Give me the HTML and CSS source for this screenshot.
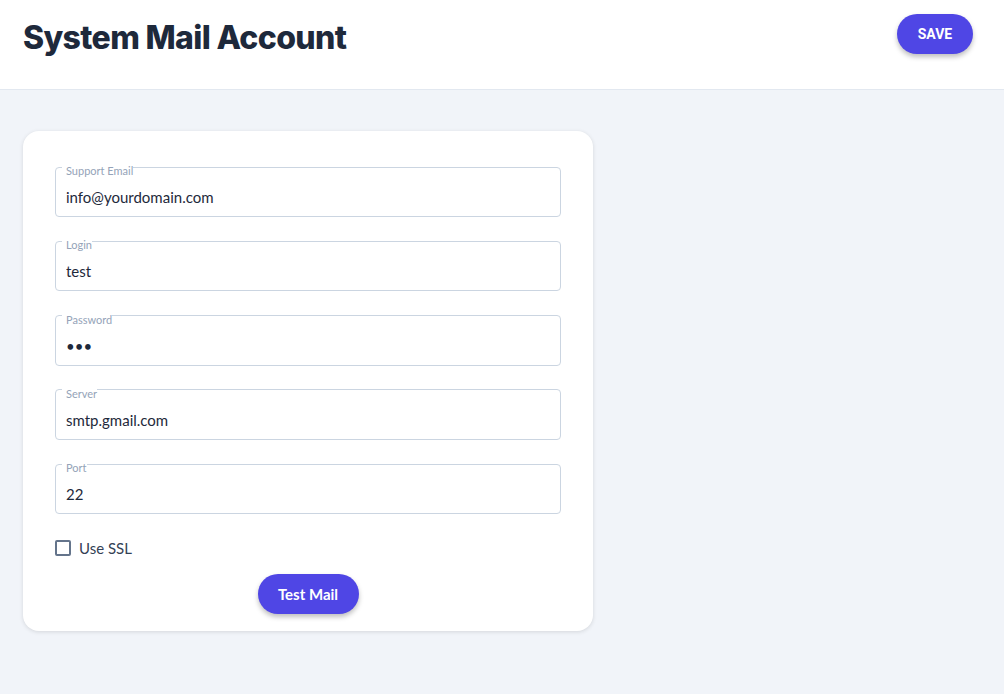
FILE: index.html
```html
<!DOCTYPE html>
<html lang="en">
<head>
    <meta charset="UTF-8">
    <meta name="viewport" content="width=device-width, initial-scale=1.0">
    <title>System Mail Account</title>
    <link rel="stylesheet" href="styles.css">
</head>
<body>
    <header class="topbar">
        <h1>System Mail Account</h1>
        <button type="button" class="btn btn-save">SAVE</button>
    </header>

    <main class="content">
        <form class="card">
            <fieldset class="field">
                <legend>Support Email</legend>
                <input type="text" value="info@yourdomain.com">
            </fieldset>

            <fieldset class="field">
                <legend>Login</legend>
                <input type="text" value="test">
            </fieldset>

            <fieldset class="field">
                <legend>Password</legend>
                <input type="password" value="abc">
            </fieldset>

            <fieldset class="field">
                <legend>Server</legend>
                <input type="text" value="smtp.gmail.com">
            </fieldset>

            <fieldset class="field">
                <legend>Port</legend>
                <input type="text" value="22">
            </fieldset>

            <label class="check">
                <span class="box"></span>
                Use SSL
            </label>

            <div class="actions">
                <button type="button" class="btn btn-test">Test Mail</button>
            </div>
        </form>
    </main>
</body>
</html>
```

FILE: styles.css
```css
body {
    margin: 0;
    padding: 0;
    background-color: #f1f4f9;
    font-family: Lato, "Noto Sans", sans-serif;
    color: #1e293b;
}

.topbar {
    height: 90px;
    box-sizing: border-box;
    background-color: #fff;
    border-bottom: 1px solid #e2e8f0;
    display: flex;
    justify-content: space-between;
    align-items: flex-start;
    padding: 14px 31px 0 23px;
}

.topbar h1 {
    margin: 0;
    padding-top: 4px;
    font-family: Inter, sans-serif;
    font-size: 32px;
    font-weight: 800;
    letter-spacing: -0.65px;
    color: #1e293b;
}

.btn {
    border: none;
    border-radius: 20px;
    height: 40px;
    background-color: #4f46e5;
    color: #fff;
    cursor: pointer;
    box-shadow: 0 3px 5px rgba(0, 0, 0, 0.25);
}

.btn-save {
    width: 76px;
    font-family: Roboto, sans-serif;
    font-size: 14px;
    font-weight: 700;
}

.content {
    padding: 41px 23px;
}

.card {
    width: 570px;
    box-sizing: border-box;
    background-color: #fff;
    border-radius: 16px;
    box-shadow: 0 1px 4px rgba(0, 0, 0, 0.12);
    padding: 27px 32px 17px;
    display: flex;
    flex-direction: column;
    gap: 15.25px;
}

.field {
    margin: 0;
    padding: 0 10px;
    border: 1px solid #cbd5e1;
    border-radius: 4px;
    height: 59px;
    box-sizing: border-box;
}

.field legend {
    margin-left: -4px;
    padding: 7px 0 0 4px;
    font-size: 11px;
    line-height: 11px;
    color: #94a3b8;
}

.field input {
    width: 100%;
    border: none;
    outline: none;
    padding: 12px 0 0;
    font-family: Lato, "Noto Sans", sans-serif;
    font-size: 15px;
    color: #1e293b;
    background: transparent;
}

.check {
    display: flex;
    align-items: center;
    gap: 8px;
    margin-top: 10px;
    font-size: 15px;
    color: #334155;
}

.check .box {
    width: 16px;
    height: 16px;
    box-sizing: border-box;
    border: 2px solid #64748b;
    border-radius: 2px;
}

.actions {
    display: flex;
    justify-content: center;
    margin-top: 1px;
}

.btn-test {
    width: 101px;
    font-family: Lato, sans-serif;
    font-size: 15px;
    font-weight: 700;
}
```
